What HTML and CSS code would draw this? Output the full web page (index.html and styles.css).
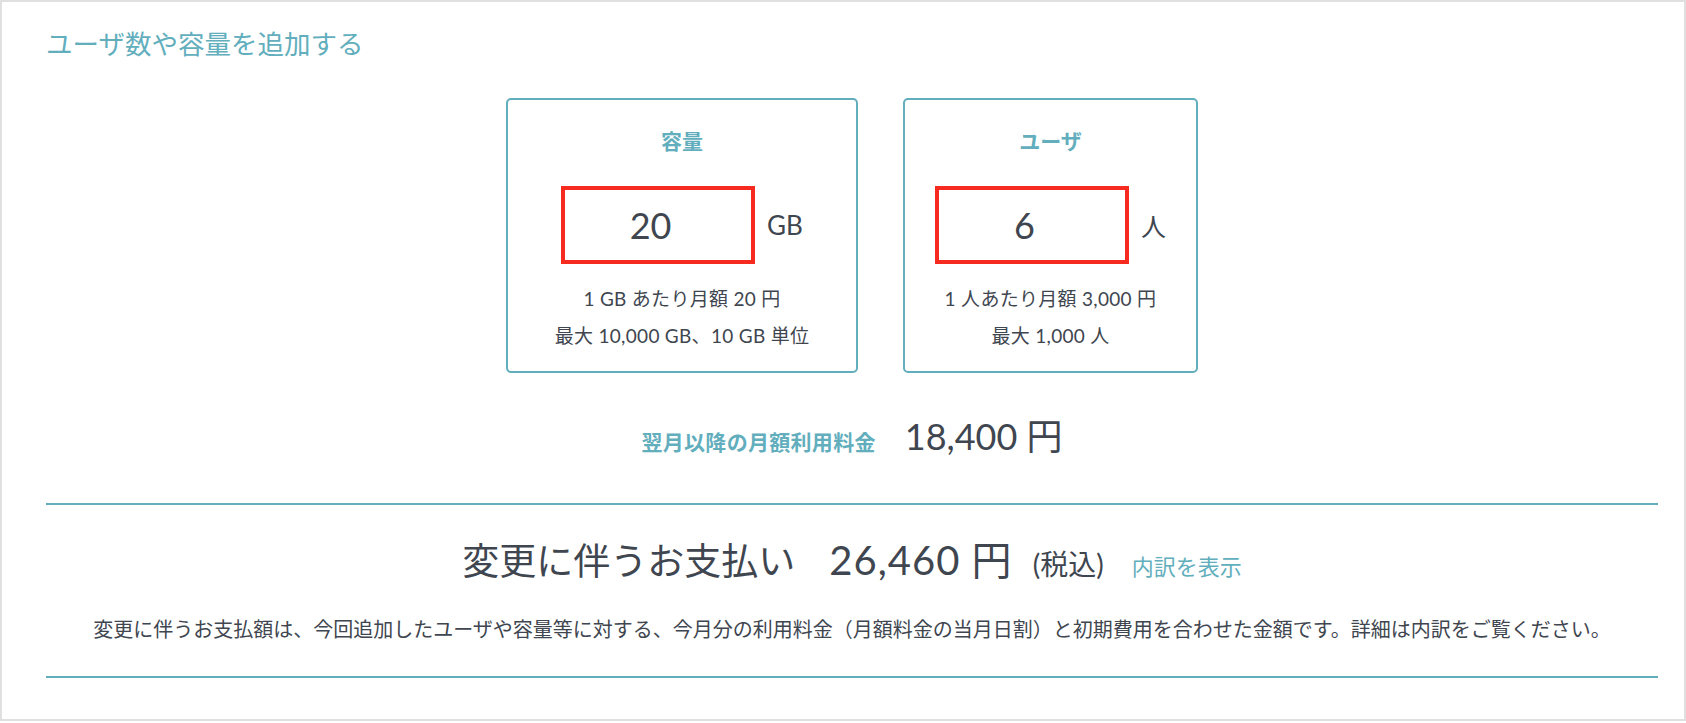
FILE: index.html
```html
<!DOCTYPE html>
<html lang="ja">
<head>
    <meta charset="UTF-8">
    <meta name="viewport" content="width=device-width, initial-scale=1.0">
    <title>ユーザ数や容量を追加する</title>
    <link rel="stylesheet" href="styles.css">
</head>
<body>
    <div class="panel">
        <h2 class="panel-title">ユーザ数や容量を追加する</h2>

        <div class="plans">
            <div class="plan plan-storage">
                <h3>容量</h3>
                <div class="amount">
                    <input type="text" id="storageInput" value="20">
                    <span class="unit">GB</span>
                </div>
                <p>1 GB あたり月額 20 円</p>
                <p>最大 10,000 GB、10 GB 単位</p>
            </div>

            <div class="plan plan-user">
                <h3>ユーザ</h3>
                <div class="amount">
                    <input type="text" id="userInput" value="6">
                    <span class="unit unit-jp">人</span>
                </div>
                <p>1 人あたり月額 3,000 円</p>
                <p>最大 1,000 人</p>
            </div>
        </div>

        <div class="monthly">
            <span class="monthly-label">翌月以降の月額利用料金</span>
            <span class="monthly-price">18,400 円</span>
        </div>

        <div class="payment">
            <div class="payment-line">
                <span class="payment-label">変更に伴うお支払い</span>
                <span class="payment-price">26,460 円</span>
                <span class="tax">(税込)</span>
                <a href="#" class="detail-link">内訳を表示</a>
            </div>
            <p class="payment-note">変更に伴うお支払額は、今回追加したユーザや容量等に対する、今月分の利用料金（月額料金の当月日割）と初期費用を合わせた金額です。詳細は内訳をご覧ください。</p>
        </div>
    </div>
</body>
</html>
```

FILE: styles.css
```css
body {
    font-family: "Lato", "Noto Sans CJK JP", sans-serif;
    color: #40464f;
    background-color: #fff;
    margin: 0;
    padding: 0;
}
.panel {
    box-sizing: border-box;
    width: 100%;
    border: 2px solid #e0e0e0;
    padding: 24px 26px 41px 44px;
}
.panel-title {
    margin: 0;
    font-size: 26.5px;
    line-height: 36px;
    font-weight: normal;
    color: #62aebd;
}
.plans {
    display: flex;
    justify-content: center;
    gap: 45px;
    margin-top: 36px;
}
.plan {
    box-sizing: border-box;
    border: 2px solid #62aebd;
    border-radius: 5px;
    padding: 26px 0 17px;
    text-align: center;
}
.plan-storage {
    width: 352px;
}
.plan-user {
    width: 295px;
}
.plan h3 {
    margin: 0;
    font-size: 21px;
    line-height: 30px;
    color: #62aebd;
}
.amount {
    display: flex;
    justify-content: center;
    align-items: center;
    margin: 30px 0 16px;
}
.amount input {
    box-sizing: border-box;
    width: 194px;
    height: 78px;
    border: 4px solid #f62a1f;
    border-radius: 0;
    padding: 0 15px 0 0;
    font-family: inherit;
    font-size: 36px;
    color: #40464f;
    text-align: center;
    outline: none;
}
.unit {
    margin-left: 12px;
    font-size: 26px;
}
.unit-jp {
    font-size: 25px;
}
.plan p {
    margin: 0;
    font-size: 19px;
    line-height: 37px;
    letter-spacing: 0.3px;
}
.monthly {
    display: flex;
    justify-content: center;
    align-items: baseline;
    gap: 29px;
    margin-top: 39px;
    height: 48px;
    line-height: 48px;
}
.monthly-label {
    font-size: 21px;
    font-weight: bold;
    letter-spacing: 0.3px;
    color: #62aebd;
}
.monthly-price {
    font-size: 36px;
}
.payment {
    margin-top: 43px;
    border-top: 2px solid #62aebd;
    border-bottom: 2px solid #62aebd;
    padding: 30px 0 33px;
    text-align: center;
}
.payment-line {
    line-height: 50px;
    height: 50px;
}
.payment-label {
    font-size: 37px;
}
.payment-price {
    font-size: 40px;
    letter-spacing: 1px;
    margin-left: 30px;
}
.tax {
    font-size: 28px;
    margin-left: 16px;
}
.detail-link {
    font-size: 22px;
    margin-left: 24px;
    color: #62aebd;
    text-decoration: none;
}
.payment-note {
    margin: 30px 0 0;
    font-size: 20px;
    line-height: 28px;
}
```
